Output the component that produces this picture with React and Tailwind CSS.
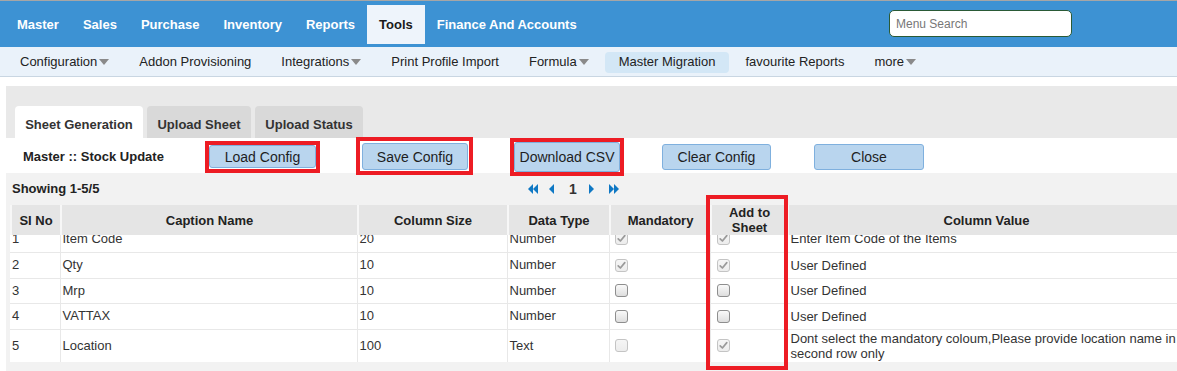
import React from "react";

const topMenu = ["Master", "Sales", "Purchase", "Inventory", "Reports", "Tools", "Finance And Accounts"];

function Caret() {
  return (
    <svg width="10" height="7" viewBox="0 0 10 7" className="ml-[2px] mt-[1px]">
      <polygon points="0,0 10,0 5,6" fill="#8a8a8a" />
    </svg>
  );
}

const subMenu = [
  { t: "Configuration", caret: true },
  { t: "Addon Provisioning" },
  { t: "Integrations", caret: true },
  { t: "Print Profile Import" },
  { t: "Formula", caret: true },
  { t: "Master Migration", active: true },
  { t: "favourite Reports" },
  { t: "more", caret: true },
];

function Check({ checked, disabled }) {
  const stroke = disabled ? "#c4c4c4" : "#8e8e8e";
  const top = disabled ? "#f6f6f6" : "#fbfbfb";
  const bot = disabled ? "#ececec" : "#dcdcdc";
  const id = `g${checked ? 1 : 0}${disabled ? 1 : 0}`;
  return (
    <svg width="13" height="13" viewBox="0 0 13 13" className="block">
      <defs>
        <linearGradient id={id} x1="0" y1="0" x2="0" y2="1">
          <stop offset="0" stopColor={top} />
          <stop offset="1" stopColor={bot} />
        </linearGradient>
      </defs>
      <rect x="0.5" y="0.5" width="12" height="12" rx="2.5" fill={`url(#${id})`} stroke={stroke} />
      {checked && (
        <path d="M3.2 6.8 L5.4 9 L9.8 3.6" fill="none" stroke="#9a9a9a" strokeWidth="1.7" strokeLinecap="round" strokeLinejoin="round" />
      )}
    </svg>
  );
}

const rows = [
  { n: "1", cap: "Item Code", size: "20", type: "Number", m: [true, true], a: [true, true], val: ["Enter Item Code of the Items"], h: "h-[26px]" },
  { n: "2", cap: "Qty", size: "10", type: "Number", m: [true, true], a: [true, true], val: ["User Defined"], h: "h-[26px]" },
  { n: "3", cap: "Mrp", size: "10", type: "Number", m: [false, false], a: [false, false], val: ["User Defined"], h: "h-[25px]" },
  { n: "4", cap: "VATTAX", size: "10", type: "Number", m: [false, false], a: [false, false], val: ["User Defined"], h: "h-[26px]" },
  {
    n: "5",
    cap: "Location",
    size: "100",
    type: "Text",
    m: [false, true],
    a: [true, true],
    val: ["Dont select the mandatory coloum,Please provide location name in", "second row only"],
    h: "h-[33px]",
  },
];

function Cols() {
  return (
    <colgroup>
      <col className="w-[50px]" />
      <col className="w-[297px]" />
      <col className="w-[150px]" />
      <col className="w-[102px]" />
      <col className="w-[101px]" />
      <col className="w-[77px]" />
      <col className="w-[396px]" />
    </colgroup>
  );
}

function RedBox({ cls }) {
  return <span className={`pointer-events-none absolute border-4 border-[#ed1c24] ${cls}`} />;
}

function Btn({ children, cls }) {
  return (
    <button className={`rounded-[3px] border border-[#7fb0de] bg-[#b9d5ee] text-[14px] text-[#1e1e1e] leading-none ${cls}`}>
      {children}
    </button>
  );
}

function Tri({ dir }) {
  return dir === "l" ? <polygon points="5,0 5,10 0,5" fill="#0f78c4" /> : <polygon points="0,0 0,10 5,5" fill="#0f78c4" />;
}

export default function App() {
  const th = "border-l-2 border-[#f7f7f7] text-center align-middle font-bold text-[13px] leading-[15px] text-[#222] px-[2px]";
  const td = "border-b border-l border-[#e8e8e8] px-[2px] align-middle text-[13px] text-[#333] whitespace-nowrap";
  const tab = "flex h-[32px] items-center justify-center rounded-t-[4px] pt-[5px] text-[13px] font-bold text-[#333]";
  return (
    <div className="w-[1177px] h-[371px] overflow-hidden bg-white font-['Liberation_Sans',Arial,sans-serif]">
      <div className="h-px bg-[#a6a6a6]" />
      {/* top menu */}
      <div className="flex h-[46px] items-start bg-[#3d92d3]">
        <nav className="flex pl-[5px] pt-[4px]">
          {topMenu.map((m) => (
            <div
              key={m}
              className={`flex h-[39px] items-center px-[12px] text-[13px] font-bold ${
                m === "Tools" ? "bg-[#eef4fb] text-[#1a1a1a]" : "text-white"
              }`}
            >
              {m}
            </div>
          ))}
        </nav>
        <input
          placeholder="Menu Search"
          className="ml-auto mr-[105px] mt-[9px] h-[27px] w-[183px] rounded-[5px] border border-[#2a5a36] bg-white px-[6px] text-[12px] text-[#333] placeholder:text-[#777] outline-none"
        />
      </div>
      {/* sub menu */}
      <div className="flex h-[30px] items-center gap-[2px] border-b border-[#c9d6e2] bg-[#eaf2fa] pl-[6px] pt-[1px]">
        {subMenu.map((s) => (
          <div
            key={s.t}
            className={`flex h-[21px] items-center rounded-[4px] px-[14px] text-[13px] text-[#222] ${
              s.active ? "bg-[#d3e7f6]" : ""
            }`}
          >
            {s.t}
            {s.caret && <Caret />}
          </div>
        ))}
      </div>
      <div className="h-[9px]" />
      {/* tabs */}
      <div className="ml-[6px] flex h-[52px] items-end gap-[4px] bg-[#e9e9e9] pl-[9px]">
        <div className={`${tab} w-[128px] bg-white`}>Sheet Generation</div>
        <div className={`${tab} w-[104px] bg-[#d9d9d9]`}>Upload Sheet</div>
        <div className={`${tab} w-[108px] bg-[#d9d9d9]`}>Upload Status</div>
      </div>
      {/* toolbar */}
      <div className="relative z-10 ml-[6px] flex h-[35px] items-center bg-white pt-[2px]">
        <div className="w-[203px] pl-[17px] text-[13px] font-bold text-[#222]">Master :: Stock Update</div>
        <div className="relative">
          <Btn cls="h-[23px] w-[107px]">Load Config</Btn>
          <RedBox cls="-left-[4px] -right-[4px] -top-[4px] -bottom-[4px]" />
        </div>
        <div className="relative ml-[46px]">
          <Btn cls="h-[27px] w-[106px]">Save Config</Btn>
          <RedBox cls="-left-[6px] -right-[5px] -top-[6px] -bottom-[5px]" />
        </div>
        <div className="relative ml-[46px]">
          <Btn cls="h-[30px] w-[106px]">Download CSV</Btn>
          <RedBox cls="-left-[4px] -right-[4px] -top-[4px] -bottom-[4px]" />
        </div>
        <Btn cls="ml-[42px] h-[26px] w-[109px]">Clear Config</Btn>
        <Btn cls="ml-[43px] h-[26px] w-[110px]">Close</Btn>
      </div>
      {/* grid area */}
      <div className="ml-[6px] h-[198px] bg-[#f2f2f2]">
        <div className="flex h-[32px] items-center">
          <div className="w-[522px] pl-[6px] text-[13px] font-bold text-[#222]">Showing 1-5/5</div>
          <div className="flex items-center">
            <svg width="10" height="10" viewBox="0 0 10 10">
              <Tri dir="l" />
              <polygon points="10,0 10,10 5,5" fill="#0f78c4" />
            </svg>
            <svg width="5" height="10" viewBox="0 0 5 10" className="ml-[11px]">
              <Tri dir="l" />
            </svg>
            <span className="ml-[15px] text-[14px] font-bold text-[#333]">1</span>
            <svg width="5" height="10" viewBox="0 0 5 10" className="ml-[12px]">
              <Tri dir="r" />
            </svg>
            <svg width="10" height="10" viewBox="0 0 10 10" className="ml-[15px]">
              <Tri dir="r" />
              <polygon points="5,0 5,10 10,5" fill="#0f78c4" />
            </svg>
          </div>
        </div>
        <div className="relative ml-[4px] w-[1173px]">
          <table className="w-[1173px] table-fixed border-collapse bg-[#e5e5e5]">
            <Cols />
            <thead>
              <tr className="h-[30px]">
                <th className={`${th} border-l-0`}>SI No</th>
                <th className={th}>Caption Name</th>
                <th className={th}>Column Size</th>
                <th className={th}>Data Type</th>
                <th className={th}>Mandatory</th>
                <th className={th}>
                  Add to
                  <br />
                  Sheet
                </th>
                <th className={th}>Column Value</th>
              </tr>
            </thead>
          </table>
          <div className="h-[127px] overflow-hidden bg-white">
            <table className="-mt-[9px] w-[1173px] table-fixed border-collapse">
              <Cols />
              <tbody>
                {rows.map((r) => (
                  <tr key={r.n} className={r.h}>
                    <td className={`${td} border-l-0`}>{r.n}</td>
                    <td className={td}>{r.cap}</td>
                    <td className={td}>{r.size}</td>
                    <td className={td}>{r.type}</td>
                    <td className={`${td} pl-[5px]`}>
                      <Check checked={r.m[0]} disabled={r.m[1]} />
                    </td>
                    <td className={`${td} pl-[6px]`}>
                      <Check checked={r.a[0]} disabled={r.a[1]} />
                    </td>
                    <td className={`${td} pl-[3px] leading-[15px]`}>
                      {r.val.map((v, i) => (
                        <div key={i}>{v}</div>
                      ))}
                    </td>
                  </tr>
                ))}
              </tbody>
            </table>
          </div>
          <RedBox cls="left-[696px] -top-[10px] h-[175px] w-[82px]" />
        </div>
      </div>
    </div>
  );
}
